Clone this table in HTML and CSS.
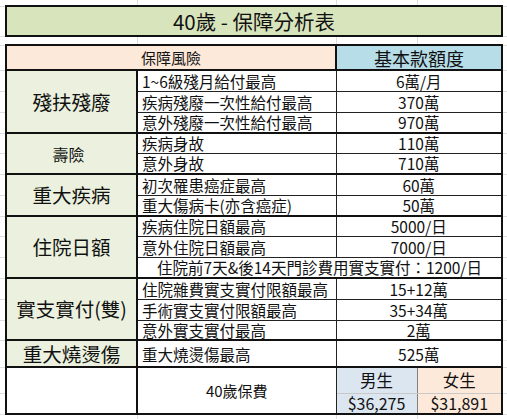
FILE: index.html
```html
<!DOCTYPE html>
<html lang="zh-Hant">
<head>
<meta charset="utf-8">
<title>40歲 - 保障分析表</title>
<link rel="stylesheet" href="styles.css">
</head>
<body>
<table class="sheet">
  <colgroup>
    <col class="col-gut-l"><col class="col-a"><col class="col-b"><col class="col-c"><col class="col-d"><col class="col-gut-r">
  </colgroup>
  <tr class="h-edge">
    <td class="gut"></td><td class="free"></td><td class="free"></td><td class="free"></td><td class="free last"></td><td class="gut"></td>
  </tr>
  <tr class="h-title">
    <td class="gut"></td><td class="title" colspan="4">40歲 - 保障分析表</td><td class="gut"></td>
  </tr>
  <tr class="h-gap">
    <td class="gut"></td><td class="free"></td><td class="free"></td><td class="free"></td><td class="free last"></td><td class="gut"></td>
  </tr>
  <tr class="h-head">
    <td class="gut"></td><td class="head risk" colspan="2">保障風險</td><td class="head amount" colspan="2">基本款額度</td><td class="gut"></td>
  </tr>

  <tr class="h-21 sec">
    <td class="gut"></td><td class="cat" rowspan="3">殘扶殘廢</td><td class="item">1~6級殘月給付最高</td><td class="val" colspan="2">6萬/月</td><td class="gut"></td>
  </tr>
  <tr class="h-21">
    <td class="gut"></td><td class="item">疾病殘廢一次性給付最高</td><td class="val" colspan="2">370萬</td><td class="gut"></td>
  </tr>
  <tr class="h-21">
    <td class="gut"></td><td class="item">意外殘廢一次性給付最高</td><td class="val" colspan="2">970萬</td><td class="gut"></td>
  </tr>

  <tr class="h-20 sec">
    <td class="gut"></td><td class="cat small" rowspan="2">壽險</td><td class="item">疾病身故</td><td class="val" colspan="2">110萬</td><td class="gut"></td>
  </tr>
  <tr class="h-21">
    <td class="gut"></td><td class="item">意外身故</td><td class="val" colspan="2">710萬</td><td class="gut"></td>
  </tr>

  <tr class="h-21 sec">
    <td class="gut"></td><td class="cat" rowspan="2">重大疾病</td><td class="item">初次罹患癌症最高</td><td class="val" colspan="2">60萬</td><td class="gut"></td>
  </tr>
  <tr class="h-21">
    <td class="gut"></td><td class="item">重大傷病卡(亦含癌症)</td><td class="val" colspan="2">50萬</td><td class="gut"></td>
  </tr>

  <tr class="h-20 sec">
    <td class="gut"></td><td class="cat" rowspan="3">住院日額</td><td class="item">疾病住院日額最高</td><td class="val" colspan="2">5000/日</td><td class="gut"></td>
  </tr>
  <tr class="h-21">
    <td class="gut"></td><td class="item">意外住院日額最高</td><td class="val" colspan="2">7000/日</td><td class="gut"></td>
  </tr>
  <tr class="h-21">
    <td class="gut"></td><td class="val wide" colspan="3">住院前7天&amp;後14天門診費用實支實付：1200/日</td><td class="gut"></td>
  </tr>

  <tr class="h-21 sec">
    <td class="gut"></td><td class="cat" rowspan="3">實支實付(雙)</td><td class="item">住院雜費實支實付限額最高</td><td class="val" colspan="2">15+12萬</td><td class="gut"></td>
  </tr>
  <tr class="h-21">
    <td class="gut"></td><td class="item">手術實支實付限額最高</td><td class="val" colspan="2">35+34萬</td><td class="gut"></td>
  </tr>
  <tr class="h-20">
    <td class="gut"></td><td class="item">意外實支實付最高</td><td class="val" colspan="2">2萬</td><td class="gut"></td>
  </tr>

  <tr class="h-27 sec">
    <td class="gut"></td><td class="cat">重大燒燙傷</td><td class="item">重大燒燙傷最高</td><td class="val" colspan="2">525萬</td><td class="gut"></td>
  </tr>

  <tr class="h-26 sec">
    <td class="gut"></td><td class="cat blank" rowspan="2"></td><td class="val fee" rowspan="2">40歲保費</td><td class="sex male">男生</td><td class="sex female">女生</td><td class="gut"></td>
  </tr>
  <tr class="h-21 end">
    <td class="gut"></td><td class="price male">$36,275</td><td class="price female">$31,891</td><td class="gut"></td>
  </tr>

  <tr class="h-edge-b">
    <td class="gut none"></td><td class="free"></td><td class="free"></td><td class="free"></td><td class="free last"></td><td class="gut none"></td>
  </tr>
</table>
</body>
</html>
```

FILE: styles.css
```css
html, body {
  margin: 0;
  padding: 0;
  background: #ffffff;
}

.sheet {
  border-collapse: collapse;
  table-layout: fixed;
  width: 507px;
  font-family: "Noto Sans CJK TC", "Noto Sans", sans-serif;
  color: #111111;
  font-size: 15.5px;
}

.col-gut-l { width: 6px; }
.col-a { width: 131px; }
.col-b { width: 199px; }
.col-c { width: 81px; }
.col-d { width: 85px; }
.col-gut-r { width: 5px; }

.sheet td {
  padding: 0;
  line-height: 16px;
  white-space: nowrap;
  vertical-align: middle;
}

/* row heights */
.h-edge { height: 6px; }
.h-title { height: 30px; }
.h-gap { height: 9px; }
.h-head { height: 25px; }
.h-20 { height: 20px; }
.h-21 { height: 21px; }
.h-26 { height: 26px; }
.h-27 { height: 27px; }
.h-edge-b { height: 5px; }

/* spreadsheet gridlines outside the table */
.gut {
  border-bottom: 1px solid #dedede;
}
.gut.none {
  border-bottom: 0;
}
.free {
  border-right: 1px solid #dedede;
}
.free.last {
  border-right: 0;
}

.title {
  border: 2px solid #111;
  background: #d8e4bc;
  text-align: center;
  font-size: 20.5px;
  line-height: 24px;
}

.head {
  border: 2px solid #111;
  text-align: center;
}
.head.risk {
  background: #fde9d9;
  font-size: 15px;
}
.head.amount {
  background: #b7dee8;
  font-size: 18px;
  line-height: 20px;
}

.cat {
  border: 2px solid #111;
  background: #ebf1de;
  text-align: center;
  font-size: 19.5px;
  line-height: 22px;
}
.cat.small {
  font-size: 16px;
  padding-right: 6px;
}
.cat.blank {
  background: #ffffff;
}

.item {
  border: 1px solid #222;
  padding-left: 4px !important;
  text-align: left;
  background: #ffffff;
}

.val {
  border: 1px solid #222;
  border-right: 2px solid #111;
  text-align: center;
  background: #ffffff;
}
.val.fee {
  font-size: 15px;
  border-right: 1px solid #222;
  border-bottom: 2px solid #111;
}

.sec td.item,
.sec td.val,
.sec td.sex {
  border-top: 2px solid #111;
}

.sex {
  font-size: 16.5px;
  text-align: center;
  border-left: 1px solid #222;
  border-bottom: 1px solid #c9c9c9;
}
.price {
  font-size: 16px;
  line-height: 16px;
  text-align: center;
  border-bottom: 2px solid #111;
  border-left: 1px solid #222;
}
.male {
  background: #dce6f1;
}
.female {
  background: #fde9d9;
  border-left: 1px solid #7f7f7f;
  border-right: 2px solid #111;
}
```
